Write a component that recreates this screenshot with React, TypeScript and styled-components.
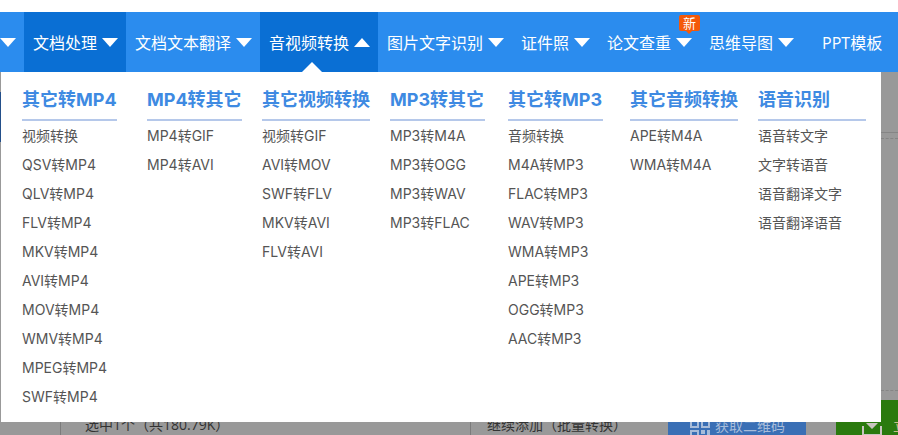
import React from "react";
import styled, { createGlobalStyle } from "styled-components";

const GlobalStyle = createGlobalStyle`
  html, body {
    margin: 0;
    padding: 0;
    background: #fff;
  }
`;

const Page = styled.div`
  position: relative;
  display: flex;
  flex-direction: column;
  width: 898px;
  height: 435px;
  padding-top: 12px;
  box-sizing: border-box;
  overflow: hidden;
  font-family: "Open Sans", "Noto Sans CJK SC", sans-serif;
`;

const NavBar = styled.nav`
  display: flex;
  flex: none;
  height: 60px;
  background: #2b8cee;
`;

const NavItem = styled.div<{ $active?: boolean; $wide?: boolean; $stub?: boolean }>`
  position: relative;
  display: flex;
  align-items: center;
  gap: 5px;
  padding: 0 8px 0 ${(p) => (p.$stub ? "0" : p.$wide ? "20px" : "9px")};
  background: ${(p) => (p.$active ? "#0a6fd4" : "transparent")};
  color: #fff;
  font-size: 16px;
  white-space: nowrap;
`;

const Caret = styled.span<{ $up?: boolean }>`
  width: 0;
  height: 0;
  border-left: 8px solid transparent;
  border-right: 8px solid transparent;
  border-top: ${(p) => (p.$up ? "0" : "9px solid #fff")};
  border-bottom: ${(p) => (p.$up ? "9px solid #fff" : "0")};
`;

const Pointer = styled.span`
  position: absolute;
  left: 42px;
  bottom: 0;
  width: 0;
  height: 0;
  border-left: 10px solid transparent;
  border-right: 10px solid transparent;
  border-bottom: 10px solid #fff;
`;

const Badge = styled.span`
  position: absolute;
  left: 81px;
  top: 3px;
  width: 21px;
  height: 16px;
  background: #f4590a;
  border-radius: 2px;
  color: #fff;
  font-size: 13px;
  line-height: 16px;
  text-align: center;
  &::after {
    content: "";
    position: absolute;
    left: 7px;
    bottom: -3px;
    border-left: 3px solid transparent;
    border-right: 3px solid transparent;
    border-top: 3px solid #f4590a;
  }
`;

const Backdrop = styled.div`
  display: flex;
  flex: 1;
  flex-direction: column;
  min-height: 0;
  background: #999;
`;

const Workspace = styled.div`
  display: flex;
  flex: 1;
  justify-content: space-between;
  min-height: 0;
`;

const EdgeStrip = styled.div`
  flex: none;
  width: 1px;
  height: 50px;
  margin-top: 20px;
  background: #234f8a;
`;

const SidePane = styled.div`
  flex: none;
  width: 17px;
`;

const SideRule = styled.div<{ $top: number; $dashed?: boolean }>`
  margin-top: ${(p) => p.$top}px;
  border-top: 1px ${(p) => (p.$dashed ? "dashed" : "solid")} #858585;
`;

const BottomRow = styled.div`
  display: flex;
  flex: none;
  align-items: center;
  height: 50px;
  margin-bottom: -15px;
  padding-left: 60px;
  color: #333;
  font-size: 14px;
  white-space: nowrap;
`;

const Cell = styled.div<{ $width: number; $indent: number }>`
  display: flex;
  align-self: stretch;
  align-items: center;
  box-sizing: border-box;
  flex: none;
  width: ${(p) => p.$width}px;
  padding: 0 0 3px ${(p) => p.$indent}px;
  border-left: 1px solid #7c7c7c;
`;

const QrButton = styled.div`
  display: flex;
  flex: none;
  align-items: center;
  gap: 3px;
  box-sizing: border-box;
  width: 138px;
  height: 40px;
  margin-left: 21px;
  padding-left: 20px;
  background: #3a6fb5;
  color: #a8bcd9;
`;

const GreenButton = styled.div`
  display: flex;
  flex: none;
  align-self: stretch;
  align-items: center;
  gap: 11px;
  width: 62px;
  margin-left: 30px;
  padding-left: 26px;
  box-sizing: border-box;
  background: #2a7a0e;
  color: #c7c08a;
`;

const IconSlot = styled.span`
  display: flex;
  flex: none;
  margin-top: 8px;
`;

const Dropdown = styled.div`
  position: absolute;
  left: 1px;
  top: 72px;
  display: flex;
  box-sizing: border-box;
  width: 880px;
  height: 350px;
  padding: 16px 0 0 21px;
  background: #fff;
  font-family: "Inter", "Noto Sans CJK SC", sans-serif;
`;

const Column = styled.div<{ $width: number; $gap: number }>`
  flex: none;
  width: ${(p) => p.$width}px;
  margin-right: ${(p) => p.$gap}px;
`;

const Heading = styled.div`
  height: 31px;
  border-bottom: 2px solid #b5c8ea;
  color: #3e8ae2;
  font-size: 18px;
  font-weight: 700;
  line-height: 24px;
  white-space: nowrap;
`;

const LinkList = styled.div`
  display: flex;
  flex-direction: column;
`;

const LinkRow = styled.div`
  height: 29px;
  color: #555;
  font-size: 14px;
  line-height: 29px;
  white-space: nowrap;
`;

const navItems = [
  { label: "文档处理", active: true },
  { label: "文档文本翻译" },
  { label: "音视频转换", open: true, active: true },
  { label: "图片文字识别" },
  { label: "证件照" },
  { label: "论文查重", badge: true },
  { label: "思维导图" },
];

const columns = [
  { title: "其它转MP4", width: 95, gap: 30, links: ["视频转换", "QSV转MP4", "QLV转MP4", "FLV转MP4", "MKV转MP4", "AVI转MP4", "MOV转MP4", "WMV转MP4", "MPEG转MP4", "SWF转MP4"] },
  { title: "MP4转其它", width: 95, gap: 20, links: ["MP4转GIF", "MP4转AVI"] },
  { title: "其它视频转换", width: 108, gap: 20, links: ["视频转GIF", "AVI转MOV", "SWF转FLV", "MKV转AVI", "FLV转AVI"] },
  { title: "MP3转其它", width: 95, gap: 23, links: ["MP3转M4A", "MP3转OGG", "MP3转WAV", "MP3转FLAC"] },
  { title: "其它转MP3", width: 95, gap: 27, links: ["音频转换", "M4A转MP3", "FLAC转MP3", "WAV转MP3", "WMA转MP3", "APE转MP3", "OGG转MP3", "AAC转MP3"] },
  { title: "其它音频转换", width: 108, gap: 20, links: ["APE转M4A", "WMA转M4A"] },
  { title: "语音识别", width: 108, gap: 0, links: ["语音转文字", "文字转语音", "语音翻译文字", "语音翻译语音"] },
];

function QrIcon() {
  return (
    <svg width="24" height="24" viewBox="0 0 24 24" fill="#a8bcd9">
      <path d="M2 2h9v9H2zM4 4v5h5V4zM13 2h9v9h-9zM15 4v5h5V4zM2 13h9v9H2zM4 15v5h5v-5zM13 13h4v4h-4zM19 13h3v9h-9v-3h6z" fillRule="evenodd" />
    </svg>
  );
}

function DownloadIcon() {
  return (
    <svg width="20" height="20" viewBox="0 0 20 20" fill="#c9c4c0">
      <path d="M4 4h12l-6 6zM0 7h2v8h16V7h2v10H0z" />
    </svg>
  );
}

export default function App() {
  return (
    <Page>
      <GlobalStyle />
      <NavBar>
        <NavItem $stub>
          <Caret />
        </NavItem>
        {navItems.map((item) => (
          <NavItem key={item.label} $active={item.active}>
            {item.label}
            <Caret $up={item.open} />
            {item.open && <Pointer />}
            {item.badge && <Badge>新</Badge>}
          </NavItem>
        ))}
        <NavItem $wide>PPT模板</NavItem>
      </NavBar>
      <Backdrop>
        <Workspace>
          <EdgeStrip />
          <SidePane>
            <SideRule $top={60} />
            <SideRule $top={5} $dashed />
            <SideRule $top={251} $dashed />
          </SidePane>
        </Workspace>
        <BottomRow>
          <Cell $width={410} $indent={24}>选中1个（共180.79K）</Cell>
          <Cell $width={177} $indent={16}>继续添加（批量转换）</Cell>
          <QrButton>
            <IconSlot>
              <QrIcon />
            </IconSlot>
            获取二维码
          </QrButton>
          <GreenButton>
            <IconSlot>
              <DownloadIcon />
            </IconSlot>
            立即转换
          </GreenButton>
        </BottomRow>
      </Backdrop>
      <Dropdown>
        {columns.map((col) => (
          <Column key={col.title} $width={col.width} $gap={col.gap}>
            <Heading>{col.title}</Heading>
            <LinkList>
              {col.links.map((link) => (
                <LinkRow key={link}>{link}</LinkRow>
              ))}
            </LinkList>
          </Column>
        ))}
      </Dropdown>
    </Page>
  );
}
